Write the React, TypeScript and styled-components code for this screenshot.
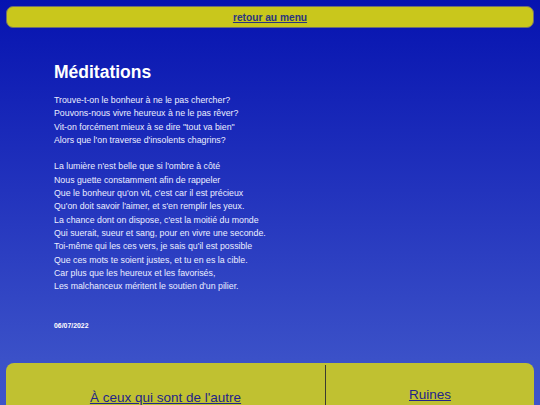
import React from 'react'
import styled, { createGlobalStyle } from 'styled-components'

const GlobalStyle = createGlobalStyle`
  html, body {
    margin: 0;
    padding: 0;
  }
  body {
    min-height: 100vh;
    background: linear-gradient(to bottom, #0613b0 0%, #2233bd 45%, #3b51c8 85%, #3f56ca 100%);
    font-family: "Liberation Sans", Arial, sans-serif;
    color: #eef0ff;
  }
`

const Page = styled.div`
  display: flex;
  flex-direction: column;
  padding: 6px 6px 0;
`

const NavBar = styled.nav`
  height: 20px;
  display: flex;
  align-items: center;
  justify-content: center;
  background: #c9c71c;
  border: 1px solid #6f6f70;
  border-radius: 7px;
`

const NavLink = styled.a`
  font-size: 10.2px;
  font-weight: bold;
  color: #2a3580;
  text-decoration: underline;
`

const Article = styled.main`
  padding: 34px 48px 0;
`

const Title = styled.h1`
  margin: 0 0 11px;
  font-size: 17.5px;
  font-weight: bold;
  color: #ffffff;
`

const Stanza = styled.p`
  margin: 0 0 13.3px;
  font-size: 8.8px;
  line-height: 13.3px;
  color: #eceeff;
`

const DateLine = styled.p`
  margin: 29px 0 0;
  font-size: 6.9px;
  font-weight: bold;
  color: #ffffff;
`

const Footer = styled.footer`
  margin-top: 34px;
  display: grid;
  grid-template-columns: 319px 1fr;
  background: #c0c131;
  border-radius: 8px 8px 0 0;
  height: 60px;
`

const Cell = styled.div<{ $top: number; $divider?: boolean }>`
  display: flex;
  justify-content: center;
  align-items: flex-start;
  padding-top: ${p => p.$top}px;
  margin-top: 2px;
  border-left: ${p => (p.$divider ? '1px solid #3b3b30' : 'none')};
`

const FooterLink = styled.a`
  font-size: 13.5px;
  color: #23238a;
  text-decoration: underline;
`

const stanzas = [
  [
    'Trouve-t-on le bonheur à ne le pas chercher?',
    'Pouvons-nous vivre heureux à ne le pas rêver?',
    'Vit-on forcément mieux à se dire "tout va bien"',
    "Alors que l'on traverse d'insolents chagrins?",
  ],
  [
    "La lumière n'est belle que si l'ombre à côté",
    'Nous guette constamment afin de rappeler',
    "Que le bonheur qu'on vit, c'est car il est précieux",
    "Qu'on doit savoir l'aimer, et s'en remplir les yeux.",
    "La chance dont on dispose, c'est la moitié du monde",
    'Qui suerait, sueur et sang, pour en vivre une seconde.',
    "Toi-même qui les ces vers, je sais qu'il est possible",
    'Que ces mots te soient justes, et tu en es la cible.',
    'Car plus que les heureux et les favorisés,',
    "Les malchanceux méritent le soutien d'un pilier.",
  ],
]

export default function App() {
  return (
    <>
      <GlobalStyle />
      <Page>
        <NavBar>
          <NavLink href="#">retour au menu</NavLink>
        </NavBar>
        <Article>
          <Title>Méditations</Title>
          {stanzas.map((lines, i) => (
            <Stanza key={i}>
              {lines.map((l, j) => (
                <React.Fragment key={j}>
                  {l}
                  {j < lines.length - 1 && <br />}
                </React.Fragment>
              ))}
            </Stanza>
          ))}
          <DateLine>06/07/2022</DateLine>
        </Article>
        <Footer>
          <Cell $top={25}>
            <FooterLink href="#">À ceux qui sont de l'autre</FooterLink>
          </Cell>
          <Cell $top={22} $divider>
            <FooterLink href="#">Ruines</FooterLink>
          </Cell>
        </Footer>
      </Page>
    </>
  )
}
